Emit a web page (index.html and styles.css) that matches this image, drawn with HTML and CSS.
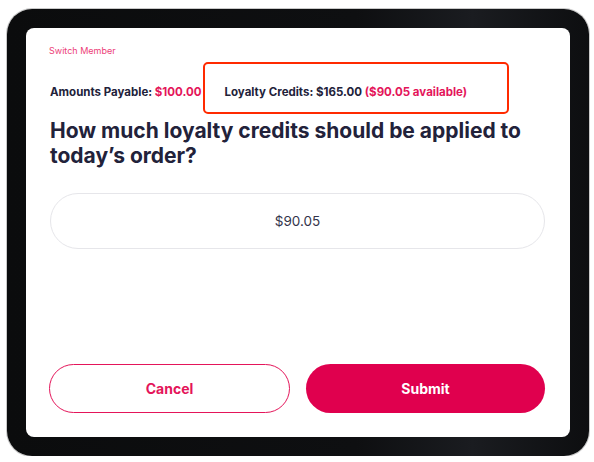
FILE: index.html
```html
<!DOCTYPE html>
<html>
<head>
<meta charset="utf-8">
<link rel="stylesheet" href="styles.css">
</head>
<body>
<div class="device">
  <div class="screen">
    <a class="switch">Switch Member</a>
    <div class="summary">
      <span class="item">Amounts Payable: <span class="pink">$100.00</span></span>
      <span class="item loyalty">Loyalty Credits: $165.00 <span class="pink">($90.05 available)</span><span class="highlight"></span></span>
    </div>
    <h1 class="question">How much loyalty credits should be applied to today’s order?</h1>
    <div class="amount-input">$90.05</div>
    <div class="actions">
      <button class="btn btn-outline">Cancel</button>
      <button class="btn btn-solid">Submit</button>
    </div>
  </div>
</div>
</body>
</html>
```
FILE: styles.css
```css
* { box-sizing: border-box; }
html, body { margin: 0; padding: 0; background: #ffffff; }
body { font-family: Inter, "Liberation Sans", sans-serif; }

.device {
  margin: 9px 0 0 7px;
  width: 582px;
  height: 447px;
  padding: 19px;
  background: linear-gradient(90deg, #0b0c0d 0%, #0e0f11 60%, #1a1c20 80%, #0d0e10 100%);
  border-radius: 25px;
  box-shadow: 0 0 0 1px #c9c9c9;
}

.screen {
  width: 100%;
  height: 100%;
  background: #ffffff;
  border-radius: 8px;
  padding: 17px 25px 0 23px;
  display: flex;
  flex-direction: column;
}

.switch {
  font-size: 9px;
  line-height: 12px;
  color: #ec3d78;
}

.summary {
  margin-top: 28px;
  display: flex;
  align-items: center;
  gap: 23px;
  font-size: 11.5px;
  line-height: 14px;
  font-weight: 700;
  color: #22223a;
  padding-left: 1px;
}

.pink { color: #e4155a; }

.loyalty { position: relative; }

.highlight {
  position: absolute;
  left: -22px;
  top: -23px;
  width: 306px;
  height: 52px;
  border: 2.5px solid #ff2a00;
  border-radius: 5px;
}

.question {
  margin: 19px 0 0 1px;
  font-size: 21px;
  line-height: 25px;
  font-weight: 700;
  color: #22223a;
}

.amount-input {
  margin-top: 25px;
  margin-left: 1px;
  height: 56px;
  border: 1px solid #e6e6ea;
  border-radius: 28px;
  display: flex;
  align-items: center;
  justify-content: center;
  font-size: 13.5px;
  color: #33334a;
}

.actions {
  margin-top: 115px;
  display: flex;
  gap: 16px;
}

.btn {
  flex: 1;
  height: 49px;
  border-radius: 25px;
  font-family: Inter, "Liberation Sans", sans-serif;
  font-size: 14px;
  font-weight: 700;
  cursor: pointer;
}

.btn-outline {
  background: #ffffff;
  border: 1.5px solid #e4155a;
  color: #e4155a;
}

.btn-solid {
  background: #e0004e;
  border: none;
  color: #ffffff;
}
```
